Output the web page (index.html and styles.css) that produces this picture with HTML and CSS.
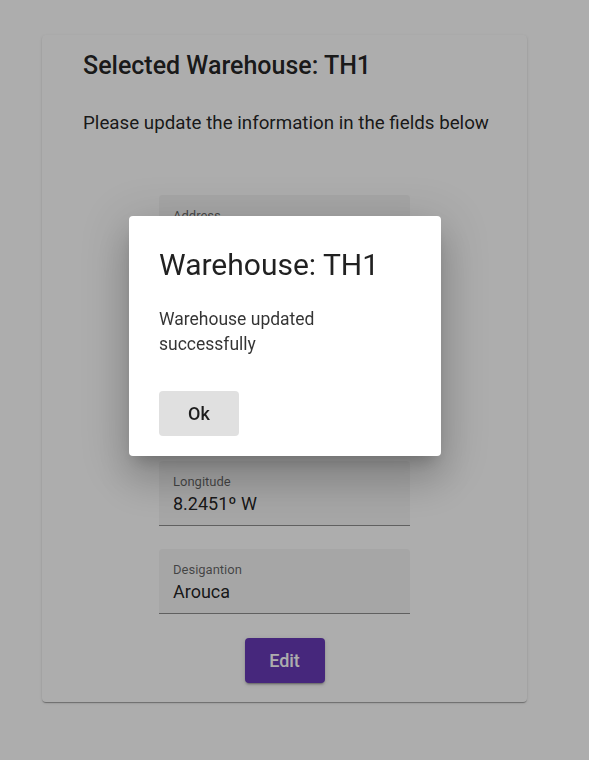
FILE: index.html
```
<!DOCTYPE html>
<html>
<head>
<meta charset="utf-8">
<link rel="stylesheet" href="styles.css">
</head>
<body>
<div class="page">
  <div class="card">
    <h2 class="card-title">Selected Warehouse: TH1</h2>
    <p class="card-sub">Please update the information in the fields below</p>
    <div class="fields">
      <div class="field"><span class="label">Address</span><span class="value">Rua da Estação, 4540</span></div>
      <div class="field"><span class="label">Altitude</span><span class="value">280 m</span></div>
      <div class="field"><span class="label">Latitude</span><span class="value">40.9321º N</span></div>
      <div class="field"><span class="label">Longitude</span><span class="value">8.2451º W</span></div>
      <div class="field"><span class="label">Desigantion</span><span class="value">Arouca</span></div>
    </div>
    <div class="actions"><button class="btn-edit">Edit</button></div>
  </div>
</div>
<div class="backdrop"></div>
<div class="dialog">
  <h1 class="dialog-title">Warehouse: TH1</h1>
  <p class="dialog-body">Warehouse updated successfully</p>
  <button class="btn-ok">Ok</button>
</div>
</body>
</html>
```
FILE: styles.css
```
html, body { margin: 0; padding: 0; }
body {
  background: #fff;
  font-family: Roboto, "Liberation Sans", sans-serif;
  color: rgba(0,0,0,.87);
  width: 589px;
  height: 760px;
  overflow: hidden;
}
.page { padding-top: 35px; padding-left: 42px; }
.card {
  box-sizing: border-box;
  width: 485px;
  height: 667px;
  background: #fff;
  border-radius: 4px;
  box-shadow: 0 2px 1px -1px rgba(0,0,0,.2), 0 1px 1px 0 rgba(0,0,0,.14), 0 1px 3px 0 rgba(0,0,0,.12);
  padding: 15px 41px 19px 41px;
  display: flex;
  flex-direction: column;
}
.card-title {
  margin: 0;
  font-size: 25px;
  line-height: 32px;
  font-weight: 500;
}
.card-sub {
  margin: 29px 0 0 0;
  font-size: 18.75px;
  line-height: 24px;
  font-weight: 400;
  white-space: nowrap;
}
.fields {
  margin-top: 60px;
  display: flex;
  flex-direction: column;
  align-items: center;
  gap: 23.5px;
}
.field {
  box-sizing: border-box;
  width: 251px;
  height: 65px;
  background: #f5f5f5;
  border-radius: 4px 4px 0 0;
  border-bottom: 1px solid rgba(0,0,0,.42);
  padding: 13px 14px 0 14px;
  display: flex;
  flex-direction: column;
}
.label {
  font-size: 13px;
  line-height: 16px;
  color: rgba(0,0,0,.6);
}
.value {
  margin-top: 2px;
  font-size: 18px;
  line-height: 23px;
  color: rgba(0,0,0,.87);
}
.actions {
  margin-top: 24px;
  display: flex;
  justify-content: center;
}
.btn-edit {
  width: 80px;
  height: 45px;
  border: none;
  border-radius: 4px;
  background: #673ab7;
  color: #fff;
  font-family: Roboto, "Liberation Sans", sans-serif;
  font-size: 18px;
  font-weight: 500;
  box-shadow: 0 3px 1px -2px rgba(0,0,0,.2), 0 2px 2px 0 rgba(0,0,0,.14), 0 1px 5px 0 rgba(0,0,0,.12);
}
.backdrop {
  position: fixed;
  inset: 0;
  background: rgba(0,0,0,.32);
}
.dialog {
  position: absolute;
  left: 129px;
  top: 216px;
  width: 312px;
  height: 240px;
  box-sizing: border-box;
  background: #fff;
  border-radius: 4px;
  padding: 33px 30px 20px 30px;
  box-shadow: 0 11px 15px -7px rgba(0,0,0,.2), 0 24px 38px 3px rgba(0,0,0,.14), 0 9px 46px 8px rgba(0,0,0,.12);
  display: flex;
  flex-direction: column;
  align-items: flex-start;
}
.dialog-title {
  margin: 0;
  font-size: 30px;
  line-height: 32px;
  font-weight: 400;
  color: rgba(0,0,0,.87);
}
.dialog-body {
  margin: 26px 0 0 0;
  font-size: 17.5px;
  line-height: 25px;
  color: rgba(0,0,0,.8);
}
.btn-ok {
  margin-top: 34px;
  width: 80px;
  height: 45px;
  border: none;
  border-radius: 4px;
  background: #e0e0e0;
  color: rgba(0,0,0,.87);
  font-family: Roboto, "Liberation Sans", sans-serif;
  font-size: 18px;
  font-weight: 500;
}
```
